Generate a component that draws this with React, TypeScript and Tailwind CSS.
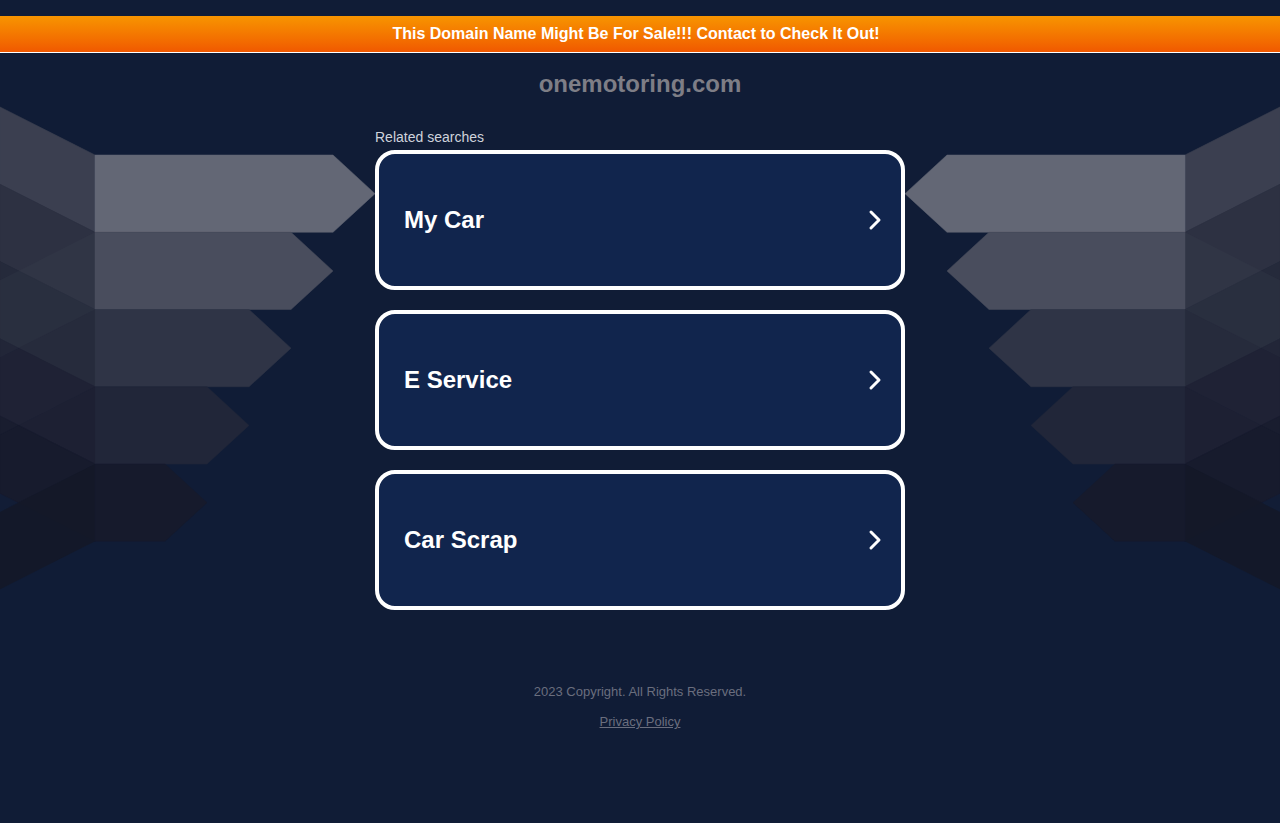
import React from "react";

const h = 77.25;
const tops = [0, 1, 2, 3, 4].map((i) => 155 + h * i);
const tips = [375, 333, 291, 249, 207];
const mains = ["#636775", "#494d5d", "#2f3446", "#212639", "#161a2c"];
const lefts = ["#3b3f50", "#2d3142", "#252a3b", "#1c2033", "#151a2c"];

function Wing({ className }: { className?: string }) {
  return (
    <svg
      className={className}
      width={380}
      height={600}
      viewBox="0 0 380 600"
      xmlns="http://www.w3.org/2000/svg"
    >
      {tops.map((T, i) => {
        const B = T + h;
        return (
          <polygon
            key={"d" + i}
            points={`0,${T - 48} 95,${T} 95,${B} 0,${B - 48}`}
            fill={lefts[i]}
            stroke={lefts[i]}
            strokeWidth={0.6}
          />
        );
      })}
      {tops.map((T, i) => {
        if (i === 0) return null;
        const B = T + h;
        return (
          <polygon
            key={"u" + i}
            points={`0,${T + 48} 95,${T} 95,${B} 0,${B + 48}`}
            fill={i === 4 ? "#141828" : mains[i]}
            opacity={i === 4 ? 0.9 : 0.14}
          />
        );
      })}
      {tops.map((T, i) => {
        const B = T + h;
        const tip = tips[i];
        const mid = T + h / 2;
        return (
          <polygon
            key={"m" + i}
            points={`95,${T} ${tip - 42},${T} ${tip},${mid} ${tip - 42},${B} 95,${B}`}
            fill={mains[i]}
            stroke={mains[i]}
            strokeWidth={0.5}
          />
        );
      })}
    </svg>
  );
}

function Card({ label }: { label: string }) {
  return (
    <a
      href="#"
      className="flex h-[140px] w-[530px] items-center justify-between rounded-[20px] border-4 border-white bg-[#11254d] pl-[25px] pr-[19px]"
    >
      <span className="text-[24px] font-bold leading-none text-white">{label}</span>
      <svg width="14" height="22" viewBox="0 0 14 22" fill="none">
        <polyline
          points="3,3 11,11 3,19"
          stroke="white"
          strokeWidth="3"
          strokeLinecap="round"
          strokeLinejoin="round"
        />
      </svg>
    </a>
  );
}

export default function App() {
  return (
    <div
      className="relative min-h-[823px] w-full overflow-hidden bg-[#101c36]"
      style={{ fontFamily: '"Liberation Sans", Arial, sans-serif' }}
    >
      <Wing className="absolute left-0 top-0" />
      <Wing className="absolute right-0 top-0 -scale-x-100" />
      <div className="relative flex flex-col items-center">
        <div className="mt-4 flex h-[37px] w-full items-center justify-center border-b border-white bg-gradient-to-b from-[#f79400] to-[#f05800] pr-[8px] text-[16px] font-bold text-white">
          This Domain Name Might Be For Sale!!! Contact to Check It Out!
        </div>
        <div className="mt-[17px] text-[24px] font-bold leading-[28px] text-[#7e7e86]">
          onemotoring.com
        </div>
        <div className="mt-[29px] w-[530px]">
          <div className="mb-[3px] text-[14px] leading-[20px] text-[#cfd3dc]">Related searches</div>
          <div className="flex flex-col gap-5">
            <Card label="My Car" />
            <Card label="E Service" />
            <Card label="Car Scrap" />
          </div>
        </div>
        <div className="mt-[74px] text-[13px] leading-4 text-[#6a6e7e]">
          2023 Copyright. All Rights Reserved.
        </div>
        <a href="#" className="mt-[14px] text-[13px] leading-4 text-[#6a6e7e] underline">
          Privacy Policy
        </a>
      </div>
    </div>
  );
}
